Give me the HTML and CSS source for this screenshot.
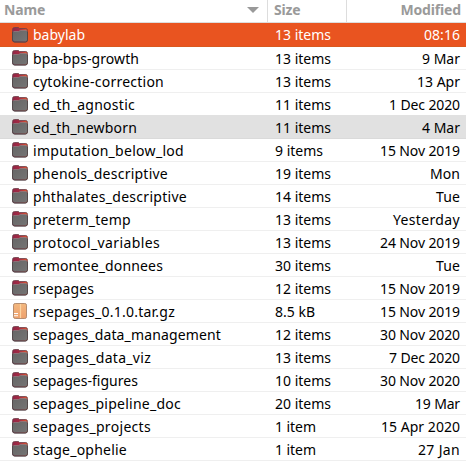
FILE: index.html
```
<!DOCTYPE html>
<html lang="en">
<head>
<meta charset="utf-8">
<title>Files</title>
<link rel="stylesheet" href="styles.css">
</head>
<body>
<svg width="0" height="0" class="defs" aria-hidden="true">
  <defs>
    <linearGradient id="tab" x1="0" x2="1" y1="0" y2="0"><stop offset="0" stop-color="#8f2547"/><stop offset=".45" stop-color="#a52c43"/><stop offset="1" stop-color="#e4562c"/></linearGradient>
    <linearGradient id="front" x1="0" x2="1" y1="0" y2="1"><stop offset="0" stop-color="#666"/><stop offset="1" stop-color="#757474"/></linearGradient>
    <linearGradient id="box" x1="0" x2="0" y1="0" y2="1"><stop offset="0" stop-color="#f3b87f"/><stop offset="1" stop-color="#eea06c"/></linearGradient>
  </defs>
  <symbol id="folder" viewBox="0 0 16 16">
    <path d="M.5 2.5Q.5.5 2.5.5H6.5L7.5 1.5H13.8Q15.5 1.5 15.5 3.5V12.8Q15.5 15 13.3 15H2.7Q.5 15 .5 12.8Z" fill="url(#tab)" stroke="#694049" stroke-width=".8"/>
    <path d="M1 5.2Q1 4.4 2 4.4H6.6L8.2 3.4H14Q15 3.4 15 4.5V12.7Q15 14.5 13.2 14.5H2.8Q1 14.5 1 12.7Z" fill="url(#front)"/>
    <path d="M1.5 4.5H6.7L8.2 3.5H14.5" fill="none" stroke="#918184" stroke-width=".7"/>
    <path d="M.5 5V12.8Q.5 15 2.7 15H13.3Q15.5 15 15.5 12.8V5" fill="none" stroke="#4d484a" stroke-width=".9"/>
  </symbol>
  <symbol id="package" viewBox="0 0 16 16">
    <rect x="1.5" y=".5" width="13" height="15" rx="1.7" fill="url(#box)" stroke="#b48d71"/>
    <path d="M8.5 1V15" stroke="#fbd5a3" stroke-width="1.2"/>
    <path d="M2 10.5H6M2 12.8H6" stroke="#fff" stroke-width="1.1"/>
  </symbol>
</svg>
<main class="files">
  <header class="head">
    <div class="name"><span>Name</span><svg class="sort" viewBox="0 0 12 6"><path d="M0 0H12L6 6Z"/></svg></div>
    <div class="size">Size</div>
    <div class="date">Modified</div>
  </header>
  <div id="list"></div>
</main>
<script src="files.js"></script>
</body>
</html>
```
FILE: styles.css
```
body { margin: 0; background: #fff; color: #000; font: 14px/22px "Noto Sans", sans-serif; overflow: hidden; }
.defs { position: absolute; }
.files { width: 466px; height: 468px; overflow: hidden; }
.head, .row { display: grid; grid-template-columns: 268px 79px 119px; box-sizing: border-box; white-space: nowrap; }
.head { height: 23px; margin-bottom: 1px; border-bottom: 1px solid #ddd; color: #9a9a9a; font-weight: 700; line-height: 20px; letter-spacing: -.15px; }
.head .name, .head .size { border-right: 1px solid #ddd; }
.head .name { display: flex; align-items: center; justify-content: space-between; padding: 0 8px 0 4px; }
.head .name span { padding-bottom: 2px; }
.head .size { padding-left: 6px; }
.head .date { padding-right: 5px; text-align: right; }
.sort { width: 12px; height: 6px; margin-bottom: 2px; fill: #999; }
.row { height: 23px; border-bottom: 1px solid #efefef; line-height: 24px; }
.row .name { display: flex; align-items: center; gap: 5px; height: 22px; padding-left: 12px; }
.row .size { padding-left: 7px; }
.row .date { padding-right: 6px; text-align: right; }
.icon { width: 16px; height: 16px; flex: none; }
.row .name span { padding-top: 2px; line-height: 22px; }
.selected { background: #e95420; border-color: #d9591f; color: #fff; line-height: 22px; box-shadow: 0 -1px #e95420; }
.row.selected .name span { padding-top: 0; }
.hovered { background: #e1e1e1; border-color: #dadada; box-shadow: 0 -1px #e1e1e1; }
```
FILE: files.js
```
// name, size, modified, and the text widths of each column in pixels
const files = [
  ["babylab", "13 items", "08:16", 52, 56, 36],
  ["bpa-bps-growth", "13 items", "9 Mar", 106, 56, 38],
  ["cytokine-correction", "13 items", "13 Apr", 131, 56, 43],
  ["ed_th_agnostic", "11 items", "1 Dec 2020", 102, 56, 71],
  ["ed_th_newborn", "11 items", "4 Mar", 104, 56, 38],
  ["imputation_below_lod", "9 items", "15 Nov 2019", 151, 48, 80],
  ["phenols_descriptive", "19 items", "Mon", 135, 56, 30],
  ["phthalates_descriptive", "14 items", "Tue", 154, 56, 24],
  ["preterm_temp", "13 items", "Yesterday", 98, 56, 67],
  ["protocol_variables", "13 items", "24 Nov 2019", 127, 56, 80],
  ["remontee_donnees", "30 items", "Tue", 130, 56, 24],
  ["rsepages", "12 items", "15 Nov 2019", 61, 56, 80],
  ["rsepages_0.1.0.tar.gz", "8.5 kB", "15 Nov 2019", 142, 40, 80],
  ["sepages_data_management", "12 items", "30 Nov 2020", 188, 56, 80],
  ["sepages_data_viz", "13 items", "7 Dec 2020", 118, 56, 71],
  ["sepages-figures", "10 items", "30 Nov 2020", 105, 56, 80],
  ["sepages_pipeline_doc", "20 items", "19 Mar", 148, 56, 45],
  ["sepages_projects", "1 item", "15 Apr 2020", 118, 41, 79],
  ["stage_ophelie", "1 item", "27 Jan", 94, 41, 42]
];
const list = document.getElementById("list");
files.forEach(([name, size, date, ...widths], i) => {
  const row = document.createElement("div");
  row.className = "row" + (i === 0 ? " selected" : i === 4 ? " hovered" : "");
  const icon = name.endsWith(".gz") ? "package" : "folder";
  row.innerHTML = `<div class="name"><svg class="icon"><use href="#${icon}"/></svg><span>${name}</span></div><div class="size"><span>${size}</span></div><div class="date"><span>${date}</span></div>`;
  list.append(row);
  row.querySelectorAll("span").forEach((el, n) => {
    const spacing = (widths[n] - el.getBoundingClientRect().width) / el.textContent.length;
    el.style.letterSpacing = spacing + "px";
  });
});
```
